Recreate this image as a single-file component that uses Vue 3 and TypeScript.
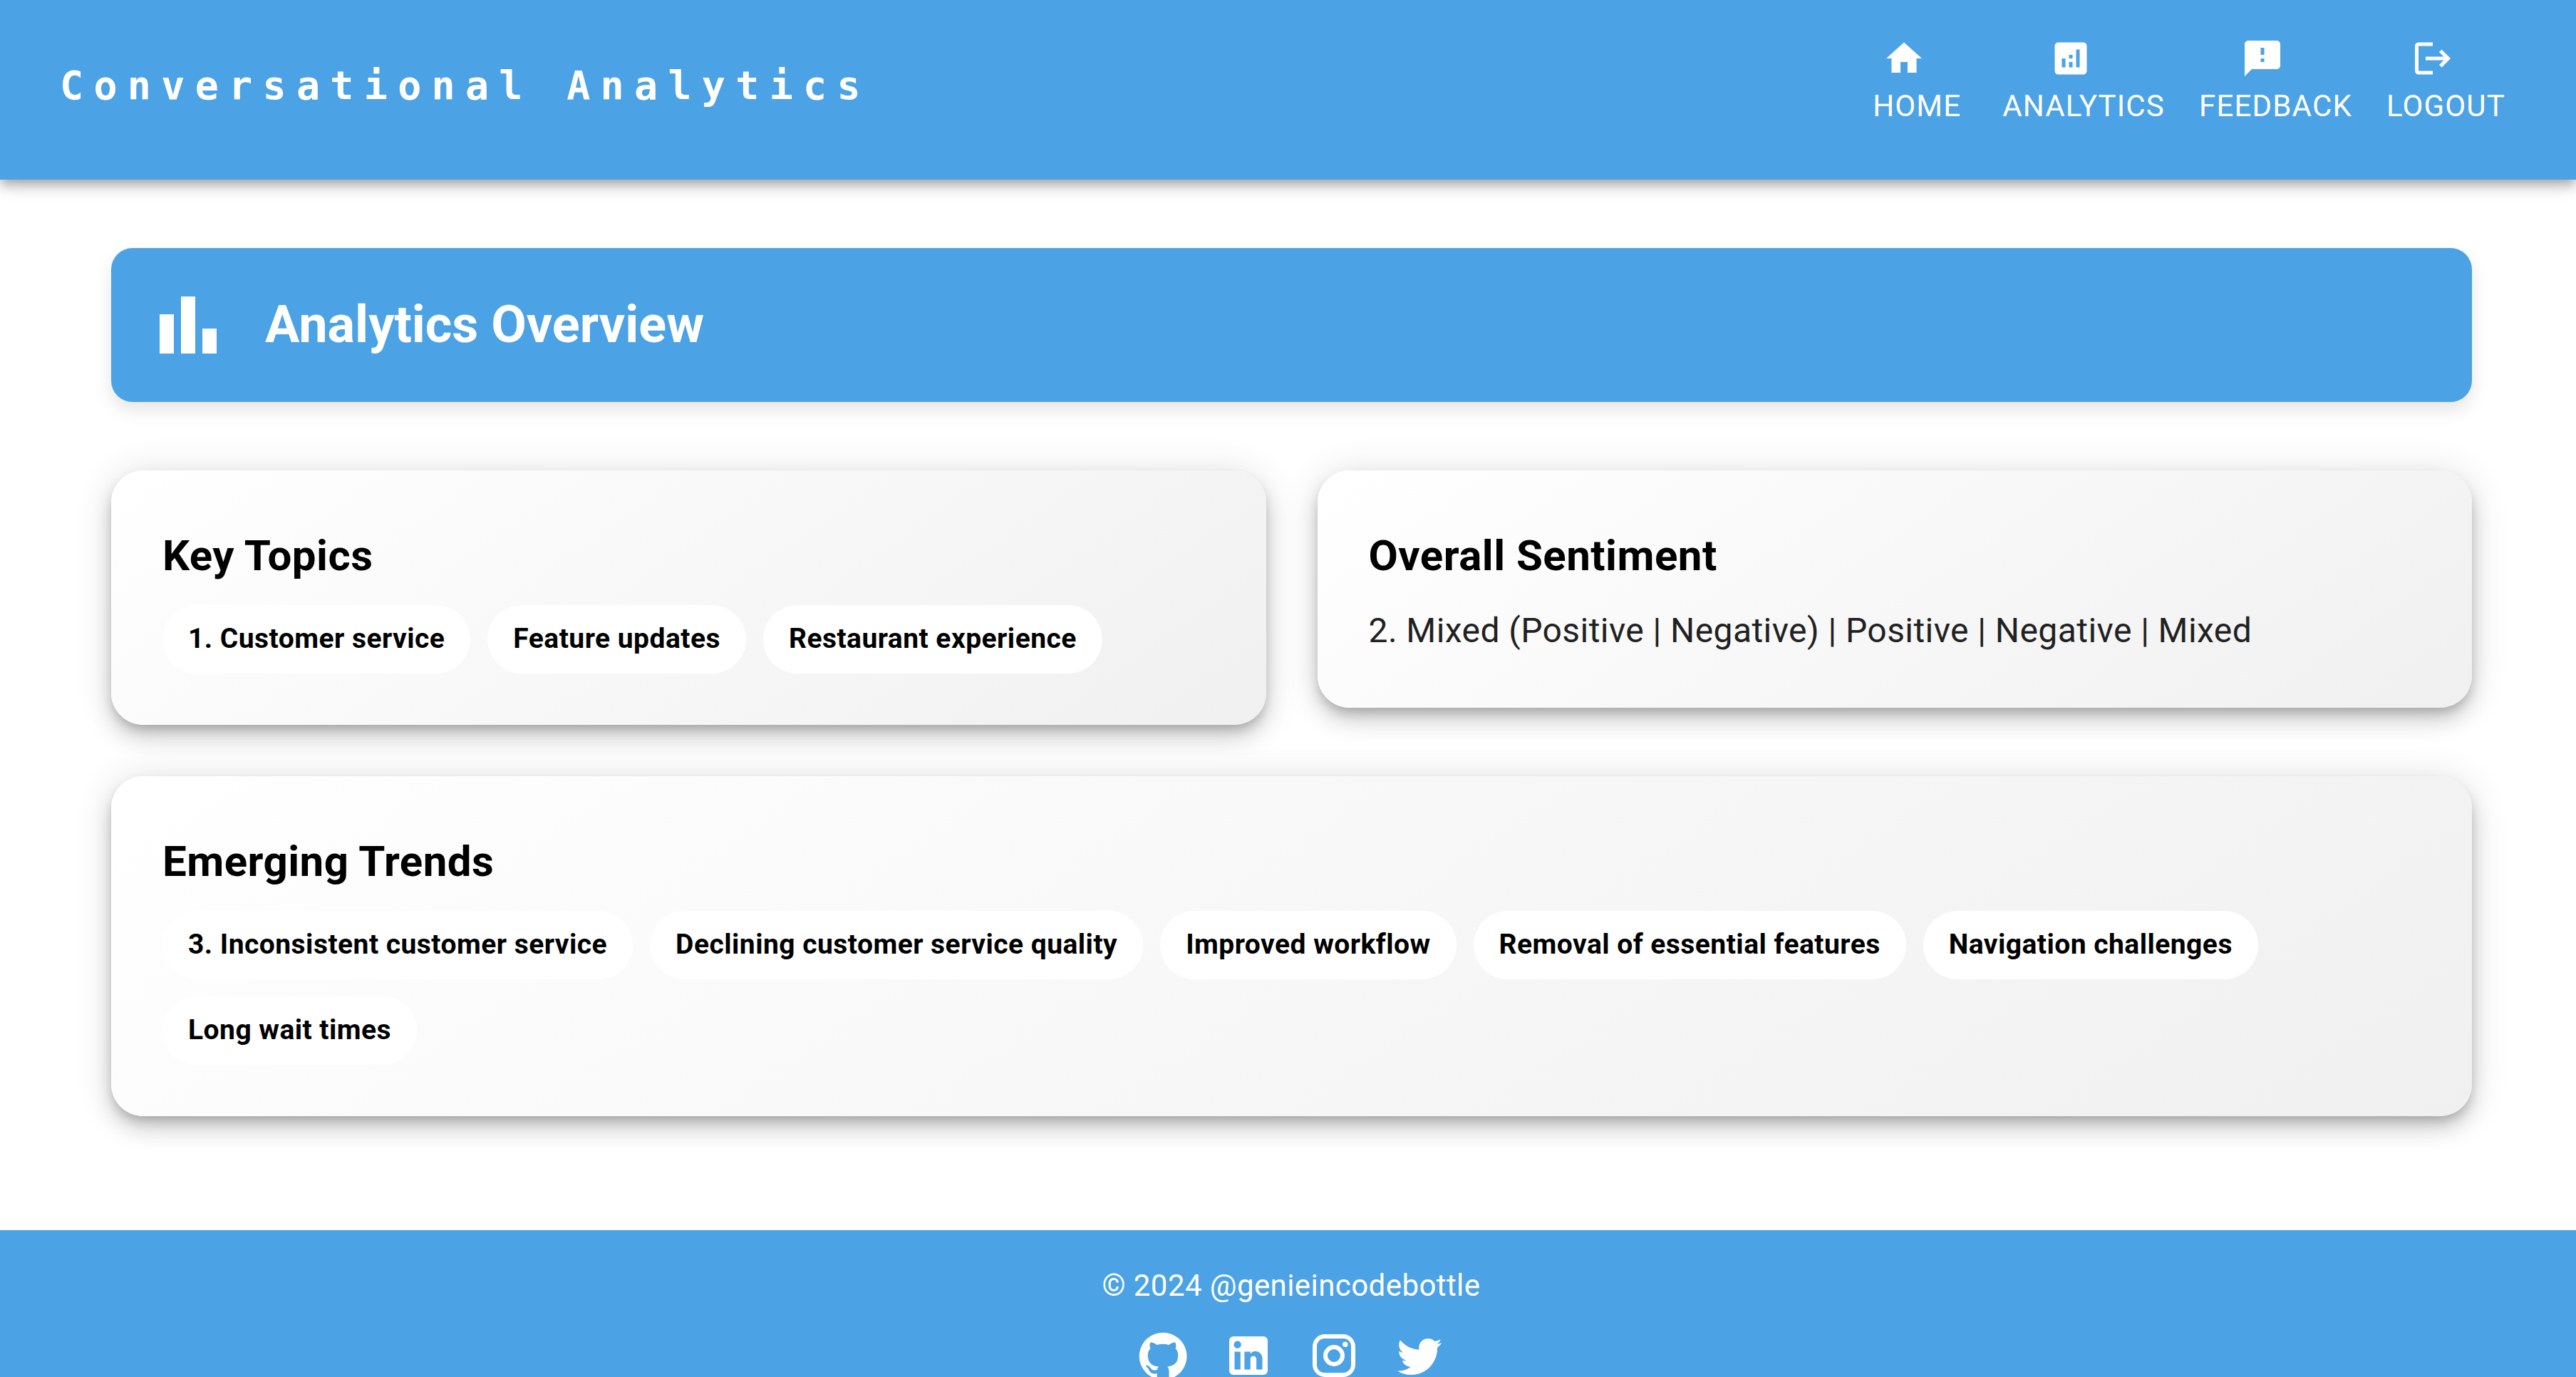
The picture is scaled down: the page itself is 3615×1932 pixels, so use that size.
<script setup lang="ts">
interface NavItem {
  label: string
  path: string
}

interface SocialLink {
  name: string
  path: string
}

const navItems: NavItem[] = [
  { label: 'Home', path: 'M10 20v-6h4v6h5v-8h3L12 3 2 12h3v8z' },
  {
    label: 'Analytics',
    path: 'M19 3H5c-1.1 0-2 .9-2 2v14c0 1.1.9 2 2 2h14c1.1 0 2-.9 2-2V5c0-1.1-.9-2-2-2zM9 17H7v-5h2v5zm4 0h-2v-3h2v3zm0-5h-2v-2h2v2zm4 5h-2V7h2v10z',
  },
  {
    label: 'Feedback',
    path: 'M20 2H4c-1.1 0-1.99.9-1.99 2L2 22l4-4h14c1.1 0 2-.9 2-2V4c0-1.1-.9-2-2-2zm-7 12h-2v-2h2v2zm0-4h-2V6h2v4z',
  },
  {
    label: 'Logout',
    path: 'M17 7l-1.41 1.41L18.17 11H8v2h10.17l-2.58 2.58L17 17l5-5zM4 5h8V3H4c-1.1 0-2 .9-2 2v14c0 1.1.9 2 2 2h8v-2H4V5z',
  },
]

const topics: string[] = ['1. Customer service', 'Feature updates', 'Restaurant experience']

const sentiment = '2. Mixed (Positive | Negative) | Positive | Negative | Mixed'

const trends: string[] = [
  '3. Inconsistent customer service',
  'Declining customer service quality',
  'Improved workflow',
  'Removal of essential features',
  'Navigation challenges',
  'Long wait times',
]

const socialLinks: SocialLink[] = [
  {
    name: 'GitHub',
    path: 'M12 1.27a11 11 0 00-3.48 21.46c.55.09.73-.28.73-.55v-1.84c-3.03.64-3.67-1.46-3.67-1.46-.55-1.29-1.28-1.65-1.28-1.65-.92-.65.1-.65.1-.65 1.1 0 1.73 1.1 1.73 1.1.92 1.65 2.57 1.2 3.21.92a2 2 0 01.64-1.47c-2.47-.27-5.04-1.19-5.04-5.5 0-1.1.46-2.1 1.2-2.84a3.76 3.76 0 010-2.93s.91-.28 3.11 1.1c1.8-.49 3.7-.49 5.5 0 2.1-1.38 3.02-1.1 3.02-1.1a3.76 3.76 0 01.1 2.93c.83.74 1.2 1.74 1.2 2.94 0 4.21-2.57 5.13-5.04 5.4.45.37.82.92.82 2.02v3.03c0 .27.1.64.73.55A11 11 0 0012 1.27',
  },
  {
    name: 'LinkedIn',
    path: 'M19 3a2 2 0 0 1 2 2v14a2 2 0 0 1-2 2H5a2 2 0 0 1-2-2V5a2 2 0 0 1 2-2h14m-.5 15.5v-5.3a3.26 3.26 0 0 0-3.26-3.26c-.85 0-1.84.52-2.32 1.3v-1.11h-2.79v8.37h2.79v-4.93c0-.77.62-1.4 1.39-1.4a1.4 1.4 0 0 1 1.4 1.4v4.93h2.79M6.88 8.56a1.68 1.68 0 0 0 1.68-1.68c0-.93-.75-1.69-1.68-1.69a1.69 1.69 0 0 0-1.69 1.69c0 .93.76 1.68 1.69 1.68m1.39 9.94v-8.37H5.5v8.37h2.77z',
  },
  {
    name: 'Instagram',
    path: 'M7.8 2h8.4C19.4 2 22 4.6 22 7.8v8.4a5.8 5.8 0 0 1-5.8 5.8H7.8C4.6 22 2 19.4 2 16.2V7.8A5.8 5.8 0 0 1 7.8 2m-.2 2A3.6 3.6 0 0 0 4 7.6v8.8C4 18.39 5.61 20 7.6 20h8.8a3.6 3.6 0 0 0 3.6-3.6V7.6C20 5.61 18.39 4 16.4 4H7.6m9.65 1.5a1.25 1.25 0 0 1 1.25 1.25A1.25 1.25 0 0 1 17.25 8 1.25 1.25 0 0 1 16 6.75a1.25 1.25 0 0 1 1.25-1.25M12 7a5 5 0 0 1 5 5 5 5 0 0 1-5 5 5 5 0 0 1-5-5 5 5 0 0 1 5-5m0 2a3 3 0 0 0-3 3 3 3 0 0 0 3 3 3 3 0 0 0 3-3 3 3 0 0 0-3-3z',
  },
  {
    name: 'Twitter',
    path: 'M22.46 6c-.77.35-1.6.58-2.46.69.88-.53 1.56-1.37 1.88-2.38-.83.5-1.75.85-2.72 1.05C18.37 4.5 17.26 4 16 4c-2.35 0-4.27 1.92-4.27 4.29 0 .34.04.67.11.98C8.28 9.09 5.11 7.38 3 4.79c-.37.63-.58 1.37-.58 2.15 0 1.49.75 2.81 1.91 3.56-.71 0-1.37-.2-1.95-.5v.03c0 2.08 1.48 3.82 3.44 4.21a4.22 4.22 0 0 1-1.93.07 4.28 4.28 0 0 0 4 2.98 8.521 8.521 0 0 1-5.33 1.84c-.34 0-.68-.02-1.02-.06C3.44 20.29 5.7 21 8.12 21 16 21 20.33 14.46 20.33 8.79c0-.19 0-.37-.01-.56.84-.6 1.56-1.36 2.14-2.23z',
  },
]
</script>

<template>
  <div class="page">
    <header class="app-bar">
      <a class="brand" href="#">Conversational Analytics</a>
      <nav class="nav">
        <button v-for="item in navItems" :key="item.label" class="nav-button" type="button">
          <svg class="nav-icon" viewBox="0 0 24 24" aria-hidden="true"><path :d="item.path" /></svg>
          <span>{{ item.label }}</span>
        </button>
      </nav>
    </header>

    <main class="content">
      <section class="banner">
        <svg class="banner-icon" viewBox="0 0 24 24" aria-hidden="true">
          <path d="M4 9h4v11H4zm12 4h4v7h-4zm-6-9h4v16h-4z" />
        </svg>
        <h1 class="banner-title">Analytics Overview</h1>
      </section>

      <div class="cards">
        <section class="card">
          <h2 class="card-title">Key Topics</h2>
          <ul class="chips">
            <li v-for="topic in topics" :key="topic" class="chip">{{ topic }}</li>
          </ul>
        </section>
        <section class="card">
          <h2 class="card-title">Overall Sentiment</h2>
          <p class="card-text">{{ sentiment }}</p>
        </section>
        <section class="card card-wide">
          <h2 class="card-title">Emerging Trends</h2>
          <ul class="chips">
            <li v-for="trend in trends" :key="trend" class="chip">{{ trend }}</li>
          </ul>
        </section>
      </div>
    </main>

    <footer class="footer">
      <p class="copyright">© 2024 @genieincodebottle</p>
      <div class="social">
        <a v-for="link in socialLinks" :key="link.name" class="social-link" href="#" :aria-label="link.name">
          <svg class="social-icon" viewBox="0 0 24 24" aria-hidden="true"><path :d="link.path" /></svg>
        </a>
      </div>
    </footer>
  </div>
</template>

<style>
html {
  scrollbar-width: none;
}

body {
  margin: 0;
  background: #fff;
}
</style>

<style scoped>
.page {
  font-family: Roboto, 'Liberation Sans', sans-serif;
  color: #212121;
}

svg {
  display: block;
  fill: currentColor;
}

.app-bar {
  position: relative;
  box-sizing: border-box;
  height: 252px;
  padding: 34px 75px 48px 84px;
  display: flex;
  align-items: center;
  justify-content: space-between;
  background: #4ba2e5;
  color: #fff;
  box-shadow:
    0 6px 12px -3px rgba(0, 0, 0, 0.2),
    0 12px 15px 0 rgba(0, 0, 0, 0.14),
    0 3px 30px 0 rgba(0, 0, 0, 0.12);
}

.brand {
  padding-top: 2px;
  font-family: 'DejaVu Sans Mono', monospace;
  font-size: 55px;
  font-weight: 700;
  line-height: 96px;
  letter-spacing: 0.26em;
  color: inherit;
  text-decoration: none;
  white-space: nowrap;
}

.nav {
  display: flex;
}

.nav-button {
  min-width: 192px;
  padding: 18px 24px;
  border: 0;
  background: transparent;
  color: inherit;
  display: flex;
  flex-direction: column;
  align-items: center;
  font-family: inherit;
  font-size: 42px;
  font-weight: 400;
  line-height: 74px;
  letter-spacing: 0.028em;
  text-transform: uppercase;
  cursor: pointer;
}

.nav-icon {
  width: 60px;
  height: 60px;
  margin-left: -12px;
  margin-right: 24px;
}

.content {
  padding: 96px 146px 160px 156px;
}

.banner {
  display: flex;
  align-items: center;
  gap: 48px;
  padding: 48px;
  border-radius: 30px;
  background: #4ba2e5;
  color: #fff;
  box-shadow: 0 12px 24px rgba(0, 0, 0, 0.1);
}

.banner-icon {
  width: 120px;
  height: 120px;
}

.banner-title {
  margin: 0;
  font-size: 72px;
  font-weight: 700;
  line-height: 96px;
}

.cards {
  margin-top: 96px;
  display: grid;
  grid-template-columns: 1fr 1fr;
  gap: 72px;
  align-items: start;
}

.card {
  padding: 72px;
  border-radius: 45px;
  background: linear-gradient(145deg, #fff, #f0f0f0);
  box-shadow:
    0 9px 15px -3px rgba(0, 0, 0, 0.2),
    0 18px 30px 0 rgba(0, 0, 0, 0.14),
    0 3px 54px 0 rgba(0, 0, 0, 0.12);
}

.card-wide {
  grid-column: 1 / -1;
}

.card-title {
  margin: 0 0 21px;
  font-size: 60px;
  font-weight: 700;
  line-height: 96px;
  letter-spacing: 0.008em;
  color: #000;
}

.card-text {
  margin: 0;
  font-size: 48px;
  line-height: 72px;
  letter-spacing: 0.009em;
}

.chips {
  margin: 0;
  padding: 0;
  list-style: none;
  display: flex;
  flex-wrap: wrap;
  gap: 24px;
}

.chip {
  padding: 0 36px 2px;
  border-radius: 48px;
  background: #fff;
  color: #000;
  font-size: 39px;
  font-weight: 700;
  line-height: 94px;
  letter-spacing: 0.012em;
  white-space: nowrap;
}

.footer {
  padding: 48px 0 48px 9px;
  background: #4ba2e5;
  color: #fff;
  display: flex;
  flex-direction: column;
  align-items: center;
  gap: 8px;
}

.copyright {
  margin: 0;
  font-size: 42px;
  line-height: 60px;
  letter-spacing: 0.01em;
}

.social {
  display: flex;
}

.social-link {
  padding: 24px;
  color: inherit;
}

.social-icon {
  width: 72px;
  height: 72px;
}
</style>
